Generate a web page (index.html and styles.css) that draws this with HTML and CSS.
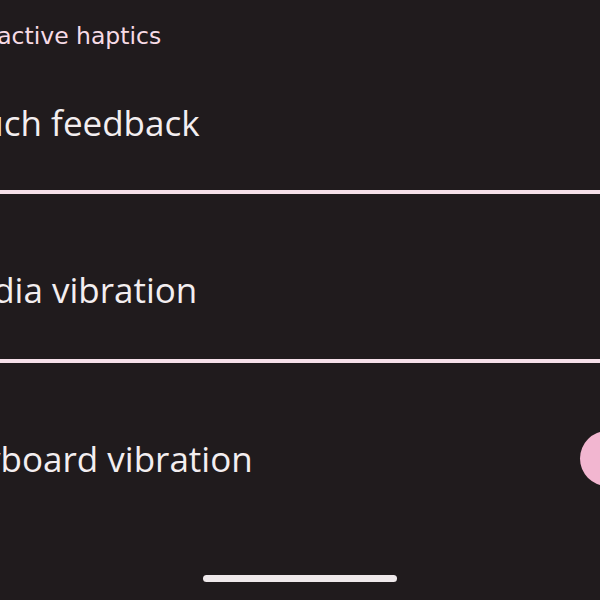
FILE: index.html
```html
<!DOCTYPE html>
<html lang="en">

<head>
    <meta charset="UTF-8">
    <meta name="viewport" content="width=device-width, initial-scale=1.0">

    <link rel="stylesheet" href="styles.css">

    <title>Vibration &amp; haptics</title>
</head>

<body>
    <div class="screen">
        <h2 class="section-title">Interactive haptics</h2>

        <ul class="prefs">
            <li class="pref">
                <span class="pref-title">Touch feedback</span>
            </li>
            <li class="pref">
                <span class="pref-title">Media vibration</span>
            </li>
            <li class="pref">
                <span class="pref-title">Keyboard vibration</span>
                <span class="switch switch-on"><span class="thumb"></span></span>
            </li>
        </ul>
    </div>

    <div class="nav-handle"></div>
</body>

</html>
```

FILE: styles.css
```css
*,
*::before,
*::after {
    box-sizing: border-box;
}

html,
body {
    height: 100%;
    overflow: hidden;
}

body {
    margin: 0;
    background: #201b1d;
    color: #f3eef0;
    font-family: 'Open Sans', 'Noto Sans', sans-serif;
}

.screen {
    width: 730px;
    margin-left: -58px;
}

.section-title {
    margin: 0;
    padding-top: 22px;
    font-family: 'DejaVu Sans', sans-serif;
    font-size: 23.5px;
    line-height: 29px;
    font-weight: 400;
    color: #f7dbe6;
}

.prefs {
    list-style: none;
    margin: 0;
    padding: 0;
}

.pref {
    display: flex;
    align-items: center;
    justify-content: space-between;
    padding: 74px 0 47px;
    border-bottom: 4px solid #f6e0e9;
}

.pref:first-child {
    padding-top: 50px;
    padding-bottom: 45px;
}

.pref:last-child {
    border-bottom: none;
}

.pref-title {
    font-size: 35px;
    line-height: 44px;
}

.switch {
    display: flex;
    align-items: center;
    justify-content: flex-end;
    width: 92px;
    height: 55px;
    margin: -6px 0 -5px;
    padding: 0 7px;
    border-radius: 28px;
    background: #332d30;
}

.switch-on {
    background: #f2b6d0;
}

.thumb {
    width: 42px;
    height: 42px;
    border-radius: 50%;
    background: #4a2535;
}

.nav-handle {
    position: absolute;
    left: 203px;
    bottom: 18px;
    width: 194px;
    height: 7px;
    border-radius: 4px;
    background: #efe9eb;
}
```
